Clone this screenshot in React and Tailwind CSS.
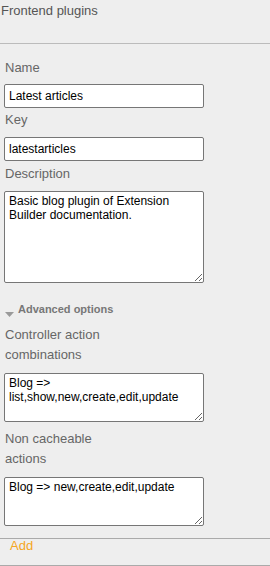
import React from "react";

const labelCls = "block w-[120px] pl-[1px] text-[13px] leading-[20px] text-[#666666]";
const inputCls =
  "block w-[200px] h-[24px] px-[4px] text-[12px] text-black bg-white border border-[#767676] rounded-[2px] outline-none";
const areaCls =
  "block w-[200px] px-[4px] py-[2px] text-[12px] leading-[14px] text-black bg-white border border-[#767676] rounded-[2px] outline-none";

export default function App() {
  return (
    <div className="w-[270px] h-[566px] bg-[#eeeeee] overflow-hidden font-['Liberation_Sans',Arial,sans-serif]">
      <div className="h-[44px] border-b border-[#bbbbbb] pl-[1px] pt-[3px] text-[13px] leading-[15px] text-[#555555]">
        Frontend plugins
      </div>
      <div className="px-[4px]">
        <label className={labelCls + " mt-[14px]"}>Name</label>
        <input className={inputCls + " mt-[6px]"} defaultValue="Latest articles" />
        <label className={labelCls + " mt-[2px]"}>Key</label>
        <input className={inputCls + " mt-[7px]"} defaultValue="latestarticles" />
        <label className={labelCls + " mt-[3px]"}>Description</label>
        <textarea
          className={areaCls + " mt-[7px] h-[92px]"}
          defaultValue="Basic blog plugin of Extension Builder documentation."
        />
        <div className="mt-[20px] h-[13px] flex items-start">
          <svg width="9" height="5" viewBox="0 0 9 5" className="ml-[1px] mt-[9px]">
            <polygon points="0,0 9,0 4.5,5" fill="#9a9a9a" />
          </svg>
          <span className="ml-[4px] text-[11px] leading-[13px] font-bold text-[#777777]">
            Advanced options
          </span>
        </div>
        <label className={labelCls + " mt-[9px]"}>Controller action combinations</label>
        <textarea
          className={areaCls + " mt-[8px] h-[49px]"}
          defaultValue="Blog => list,show,new,create,edit,update"
        />
        <label className={labelCls + " mt-[7px]"}>Non cacheable actions</label>
        <textarea
          className={areaCls + " mt-[8px] h-[49px]"}
          defaultValue="Blog => new,create,edit,update"
        />
      </div>
      <div className="mt-[12px] h-[28px] border-y border-[#aaaaaa] pl-[10px] text-[13px] leading-[14px] text-[#f5a623]">
        Add
      </div>
    </div>
  );
}
